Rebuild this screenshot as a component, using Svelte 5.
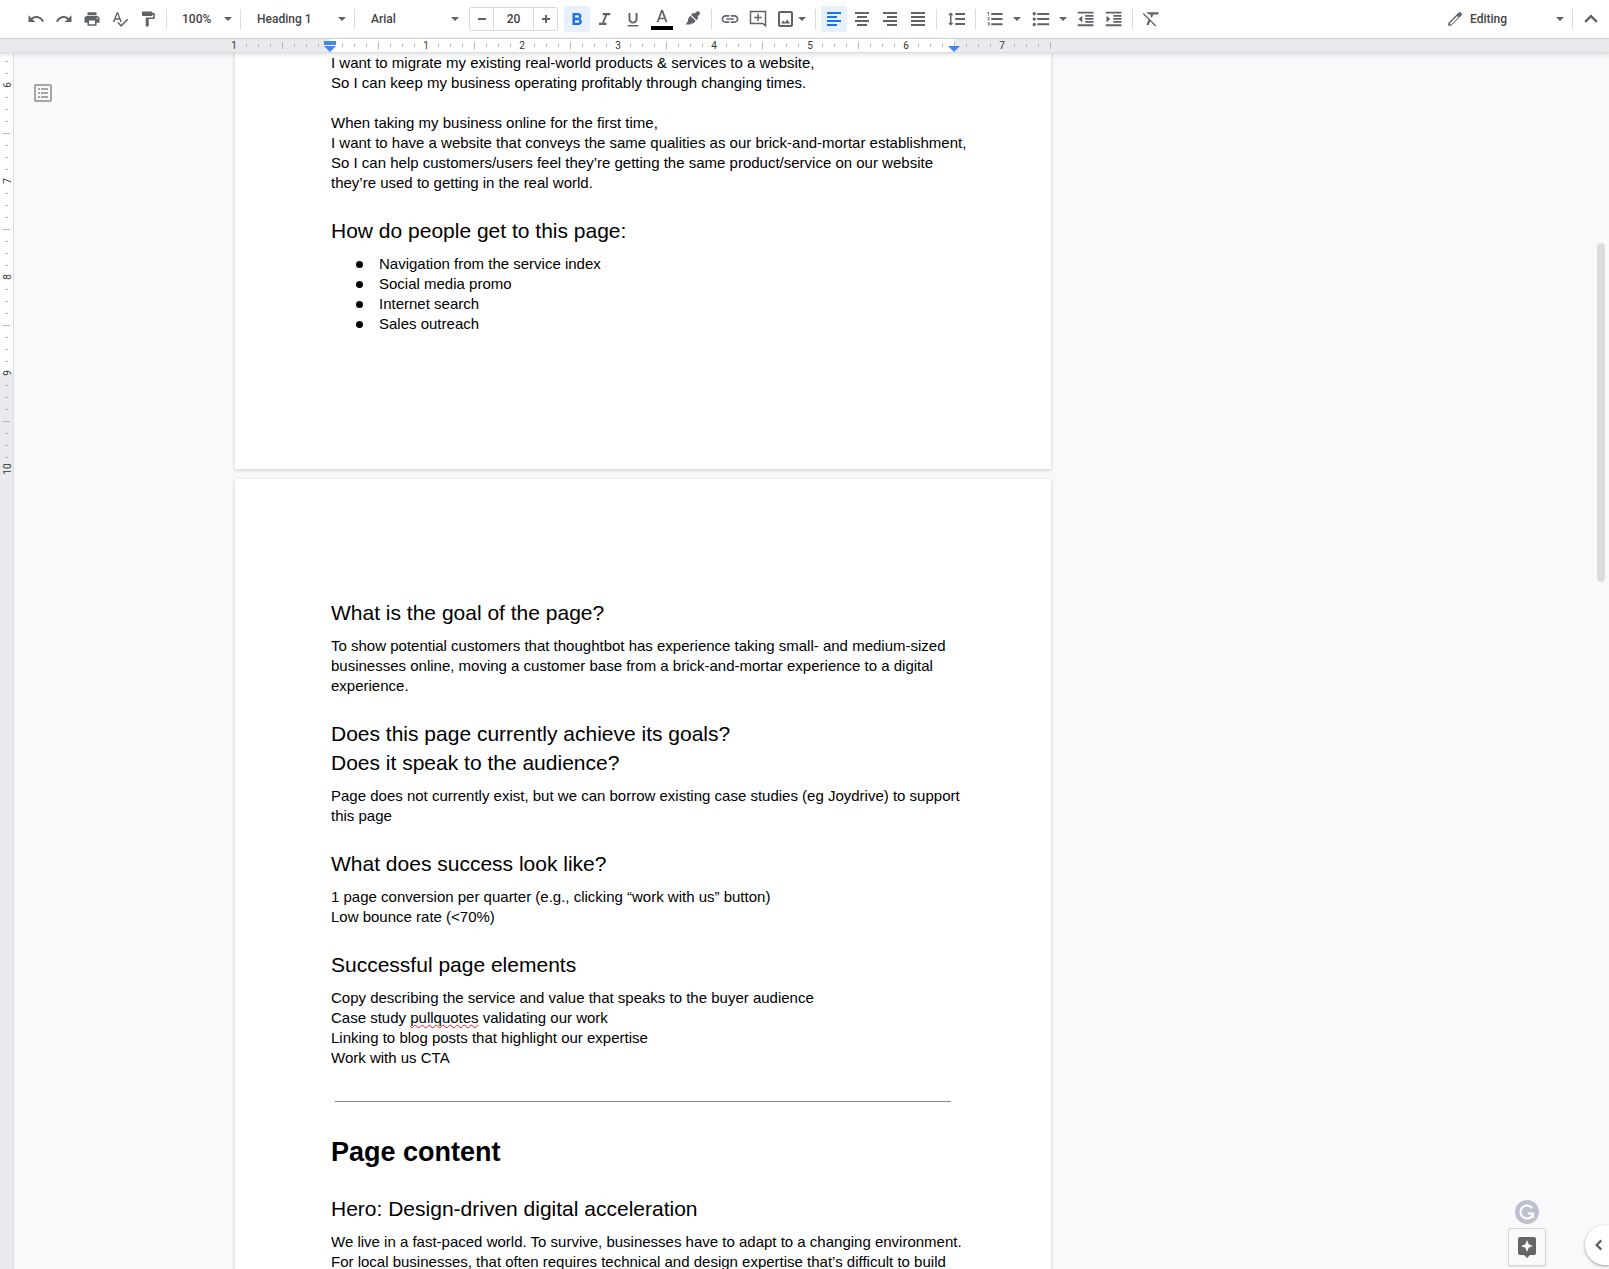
<script>
  const icons = {
    undo: 'M12.5 8c-2.65 0-5.05.99-6.9 2.6L2 7v9h9l-3.62-3.62c1.39-1.16 3.16-1.88 5.12-1.88 3.54 0 6.55 2.31 7.6 5.5l2.37-.78C21.08 11.03 17.15 8 12.5 8z',
    redo: 'M18.4 10.6C16.55 8.99 14.15 8 11.5 8c-4.65 0-8.58 3.03-9.96 7.22L3.9 16c1.05-3.19 4.05-5.5 7.6-5.5 1.95 0 3.73.72 5.12 1.88L13 16h9V7l-3.6 3.6z',
    print: 'M19 8H5c-1.66 0-3 1.34-3 3v6h4v4h12v-4h4v-6c0-1.66-1.34-3-3-3zm-3 11H8v-5h8v5zm3-7c-.55 0-1-.45-1-1s.45-1 1-1 1 .45 1 1-.45 1-1 1zm-1-9H6v4h12V3z',
    spell: 'M12.45 16h2.09L9.43 3H7.57L2.46 16h2.09l1.12-3h5.64l1.14 3zm-6.02-5L8.5 5.48 10.57 11H6.43zm15.16.59l-8.09 8.09L9.83 16l-1.41 1.41 5.09 5.09L23 13l-1.41-1.41z',
    paint: 'M18 4V3c0-.55-.45-1-1-1H5c-.55 0-1 .45-1 1v4c0 .55.45 1 1 1h12c.55 0 1-.45 1-1V6h1v4H9v11c0 .55.45 1 1 1h2c.55 0 1-.45 1-1v-9h8V4h-3z',
    bold: 'M16.2 11.6c1-.8 1.700-1.900 1.700-3.100C17.900 5.900 16 4 13.400 4H6v16h8.200c2.400 0 4.300-1.900 4.300-4.300 0-1.800-.9-3.300-2.300-4.100zM9.300 6.900h3.600c1 0 1.700.7 1.700 1.700s-.7 1.700-1.700 1.700H9.300V6.900zm4.100 10.200H9.300v-3.600h4.100c1 0 1.800.8 1.800 1.800s-.8 1.800-1.800 1.800z',
    italic: 'M9 4v3h3.2l-4 10H4v3h10v-3h-3.2l4-10H19V4z',
    underline: 'M12 18c3.31 0 6-2.69 6-6V4h-2.5v8c0 1.93-1.57 3.5-3.5 3.5S8.5 13.93 8.5 12V4H6v8c0 3.31 2.69 6 6 6zm-7 2v2h14v-2H5z',
    highlight: 'M15.5 4.500l3-2.500a2 2 0 0 1 2.700.1l.9.9a2 2 0 0 1 .1 2.700l-2.700 3.100c.8 1.400.7 2.600-.3 3.600l-1.200 1.100-7.200-7.200 1.200-1.200c1-1 2.200-1.200 3.500-.6zM9.700 7.400l7.200 7.200-2.600 2.600c-.8.8-2 .9-2.900.4L9.700 19.300H3.500l3.400-5c-.6-1-.5-2.200.3-3z',
    link: 'M2.900 12c0-1.710 1.390-3.100 3.100-3.100h5V6.800H6c-2.870 0-5.200 2.330-5.200 5.200s2.330 5.200 5.200 5.200h5v-2.100H6c-1.710 0-3.100-1.390-3.100-3.100zM7 13h10v-2H7v2zm11-6.200h-5v2.100h5c1.710 0 3.100 1.390 3.100 3.100s-1.390 3.100-3.100 3.100h-5v2.100h5c2.870 0 5.200-2.330 5.200-5.200S20.870 6.800 18 6.800z',
    comment: 'M1 1h22v22l-5-4H1V1zm2 2v14h15.700l2.300 1.900V3H3zm8 2h2v4h4v2h-4v4h-2v-4H7V9h4V5z',
    spacing: 'M6 7h2.500L5 3 1.500 7H4v10H1.500L5 21l3.500-4H6V7zm5-3v2.700h13V4H11zm0 16h13v-2.700H11V20zm0-6.700h13v-2.700H11v2.700z',
    numbered: 'M2 17.500h2v.5H3v1h1v.5H2v1h3v-4H2v1zm1-10h1v-5H1.500v1H3v4zm-1 3h1.800L2 12.600v.9h3v-1H3.200L5 10.400V9.500H2v1zM7 4v2.600h15V4H7zm0 16.300h15v-2.600H7v2.600zm0-7h15v-2.600H7v2.600z',
    bullets: 'M3 2.700a2 2 0 1 0 0 4.600 2 2 0 1 0 0-4.600zm0 7.200a2 2 0 1 0 0 4.500 2 2 0 1 0 0-4.500zm0 7.200a2 2 0 1 0 0 4.500 2 2 0 1 0 0-4.500zM7 4v2.600h16V4H7zm0 16.300h16v-2.600H7v2.600zm0-7h16v-2.600H7v2.600z',
    outdent: 'M11 17h11v-2.300H11V17zM2 12l5 4.500v-9L2 12zm-1 9.500h21v-2.500H1v2.500zM1 2.300v2.500h21V2.300H1zm10 6.700h11V6.700H11V9zm0 4h11v-2.300H11V13z',
    indent: 'M1 21.500h21v-2.500H1v2.500zM2 7.500v9l5-4.500-5-4.500zm9 9.500h11v-2.300H11V17zM1 2.300v2.500h21V2.300H1zm10 6.700h11V6.700H11V9zm0 4h11v-2.300H11V13z',
    clear: 'M2.300 4L1 5.300l7.700 7.700L5.800 20h3.100l2-4.900L17.700 22l1.300-1.300zM6 3v.3L9 6h3l-.8 2.200 2 2L15 6h7V3z',
    pencil: 'M3 17.250V21h3.750L20.500 7.300c1-1 1-2.300 0-3.300l-.5-.5c-1-1-2.300-1-3.300 0L3 17.250zM6 19H5v-1L15 8l1.500 1.500L6.500 19.500z'
  };
  const history = [['undo', 'Undo'], ['redo', 'Redo'], ['print', 'Print'], ['spell', 'Spelling and grammar check'], ['paint', 'Paint format']];
  const aligns = [
    ['Left align', 'M2 2h14v2H2zM2 6h10v2H2zM2 10h14v2H2zM2 14h10v2H2z'],
    ['Center align', 'M2 2h14v2H2zM4 6h10v2H4zM2 10h14v2H2zM4 14h10v2H4z'],
    ['Right align', 'M2 2h14v2H2zM6 6h10v2H6zM2 10h14v2H2zM6 14h10v2H6z'],
    ['Justify', 'M2 2h14v2H2zM2 6h14v2H2zM2 10h14v2H2zM2 14h14v2H2z']
  ];
  // One mark every eighth of an inch; whole inches carry a number instead.
  const marks = (from, to) => Array.from({ length: to - from + 1 }, (_, i) => from + i);
  const across = marks(0, 68);
  const down = marks(-2, 32);
  let fontSize = $state(20);
</script>

{#snippet icon(name)}
  <svg class="icon" viewBox="0 0 24 24" aria-hidden="true"><path fill-rule="evenodd" d={icons[name]} /></svg>
{/snippet}

{#snippet caret()}
  <svg class="caret" viewBox="0 0 8 4" aria-hidden="true"><path d="M0 0h8L4 4z" /></svg>
{/snippet}

<div class="app">
  <header class="toolbar">
    {#each history as [name, label]}
      <button aria-label={label}>{@render icon(name)}</button>
    {/each}
    <i class="sep"></i>
    <label class="pick zoom"><select aria-label="Zoom"><option>100%</option></select>{@render caret()}</label>
    <i class="sep"></i>
    <label class="pick style"><select aria-label="Styles"><option>Heading 1</option></select>{@render caret()}</label>
    <i class="sep"></i>
    <label class="pick font"><select aria-label="Font"><option>Arial</option></select>{@render caret()}</label>
    <div class="size">
      <button aria-label="Decrease font size" onclick={() => fontSize--}><svg viewBox="0 0 10 10"><path d="M1 4h8v2H1z" /></svg></button>
      <input aria-label="Font size" bind:value={fontSize} />
      <button aria-label="Increase font size" onclick={() => fontSize++}><svg viewBox="0 0 10 10"><path d="M1 4h3V1h2v3h3v2H6v3H4V6H1z" /></svg></button>
    </div>
    <button class="on" aria-label="Bold">{@render icon('bold')}</button>
    <button aria-label="Italic">{@render icon('italic')}</button>
    <button aria-label="Underline">{@render icon('underline')}</button>
    <button class="color" aria-label="Text color">
      <svg class="ink" viewBox="0 0 22 22" aria-hidden="true">
        <path d="M10.100 2L5.700 14h1.900l1-2.700h4.900l1 2.700h1.900L12 2h-1.900zm-1 7.700L11 4.400l1.900 5.300H9.100z" />
        <path class="black" d="M0 18h22v4H0z" />
      </svg>
    </button>
    <button class="color" aria-label="Highlight color">{@render icon('highlight')}</button>
    <i class="sep"></i>
    <button aria-label="Insert link">{@render icon('link')}</button>
    <button aria-label="Add comment">{@render icon('comment')}</button>
    <button class="image" aria-label="Insert image">
      <svg class="icon" viewBox="0 0 18 18" aria-hidden="true"><path fill-rule="evenodd" d="M3 1h11a2 2 0 0 1 2 2v12a2 2 0 0 1-2 2H3a2 2 0 0 1-2-2V3a2 2 0 0 1 2-2zm0 2v12h11V3H3zm1 10.500l2.300-2.900 1.700 1.900 2.200-3L13 13.500H4z" /></svg>
      {@render caret()}
    </button>
    <i class="sep"></i>
    {#each aligns as [label, bars], i}
      <button class:on={i === 0} aria-label={label}>
        <svg class="icon" viewBox="0 0 18 18" aria-hidden="true"><path d={bars} /></svg>
      </button>
    {/each}
    <i class="sep"></i>
    <button class="spacing" aria-label="Line spacing">{@render icon('spacing')}</button>
    <i class="sep"></i>
    <button class="list" aria-label="Numbered list">{@render icon('numbered')}{@render caret()}</button>
    <button class="list" aria-label="Bulleted list">{@render icon('bullets')}{@render caret()}</button>
    <button aria-label="Decrease indent">{@render icon('outdent')}</button>
    <button aria-label="Increase indent">{@render icon('indent')}</button>
    <i class="sep"></i>
    <button aria-label="Clear formatting">{@render icon('clear')}</button>

    <label class="pick mode">{@render icon('pencil')}<select aria-label="Mode"><option>Editing</option></select>{@render caret()}</label>
    <i class="sep"></i>
    <button aria-label="Hide the menus"><svg class="chevron" viewBox="0 0 12 12"><path d="M1 8.500l5-5 5 5" /></svg></button>
  </header>

  <div class="ruler">
    <svg width="816" height="13" aria-hidden="true">
      <rect class="live" x="95" width="624" height="13" />
      {#each across as n}
        {#if n % 8 === 0 && n !== 8}
          <text x={n * 12 - 1} y="10">{Math.abs(n / 8 - 1)}</text>
        {:else if n !== 8}
          <rect class="tick" x={n * 12 - 1} y={n % 4 ? 5 : 3} width="1" height={n % 4 ? 3 : 7} />
        {/if}
      {/each}
      <rect class="tick" x="719" y="3" width="1" height="4" />
      <path class="handle" d="M89 2h12v4H89zM89 7h12l-6 6z" />
      <path class="handle" d="M713 7h12l-6 6z" />
    </svg>
  </div>

  <main>
    <div class="side-ruler">
      <svg width="13" height="430" aria-hidden="true">
        <rect class="live" width="13" height="320" />
        {#each down as n}
          {#if n % 8 === 0}
            <text transform={`translate(11 ${32 + n * 12}) rotate(-90)`}>{6 + n / 8}</text>
          {:else}
            <rect class="tick" x={n % 4 ? 5 : 3} y={32 + n * 12} width={n % 4 ? 3 : 7} height="1" />
          {/if}
        {/each}
      </svg>
    </div>

    <button class="outline" aria-label="Show document outline">
      <svg viewBox="0 0 18 18"><path fill-rule="evenodd" d="M2 0h14a2 2 0 0 1 2 2v14a2 2 0 0 1-2 2H2a2 2 0 0 1-2-2V2a2 2 0 0 1 2-2zm0 2v14h14V2H2zm2 2h2v2H4zm3 0h7v2H7zM4 8h2v2H4zm3 0h7v2H7zm-3 4h2v2H4zm3 0h7v2H7z" /></svg>
    </button>

    <div class="pages">
      <article class="page first">
        <p>I want to migrate my existing real-world products &amp; services to a website,<br />So I can keep my business operating profitably through changing times.</p>
        <p class="after-blank">When taking my business online for the first time,<br />I want to have a website that conveys the same qualities as our brick-and-mortar establishment,<br />So I can help customers/users feel they’re getting the same product/service on our website<br />they’re used to getting in the real world.</p>
        <h2>How do people get to this page:</h2>
        <ul>
          <li>Navigation from the service index</li>
          <li>Social media promo</li>
          <li>Internet search</li>
          <li>Sales outreach</li>
        </ul>
      </article>
      <article class="page">
        <h2>What is the goal of the page?</h2>
        <p>To show potential customers that thoughtbot has experience taking small- and medium-sized<br />businesses online, moving a customer base from a brick-and-mortar experience to a digital<br />experience.</p>
        <h2>Does this page currently achieve its goals?<br />Does it speak to the audience?</h2>
        <p>Page does not currently exist, but we can borrow existing case studies (eg Joydrive) to support<br />this page</p>
        <h2>What does success look like?</h2>
        <p>1 page conversion per quarter (e.g., clicking “work with us” button)<br />Low bounce rate (&lt;70%)</p>
        <h2>Successful page elements</h2>
        <p>Copy describing the service and value that speaks to the buyer audience<br />Case study <span class="typo">pullquotes</span> validating our work<br />Linking to blog posts that highlight our expertise<br />Work with us CTA</p>
        <hr />
        <h1>Page content</h1>
        <h2>Hero: Design-driven digital acceleration</h2>
        <p>We live in a fast-paced world. To survive, businesses have to adapt to a changing environment.<br />For local businesses, that often requires technical and design expertise that’s difficult to build</p>
      </article>
    </div>

    <div class="scroll-thumb"></div>
    <div class="helpers">
      <button class="grammar" aria-label="Grammar assistant">
        <svg viewBox="0 0 24 24"><circle cx="12" cy="12" r="12" /><path d="M17.300 8.200A6.500 6.500 0 1 0 18 14.500M13 13.500h5V18" /></svg>
      </button>
      <button class="explore" aria-label="Explore">
        <svg viewBox="0 0 18 21"><path fill-rule="evenodd" d="M2 0h14a2 2 0 0 1 2 2v14a2 2 0 0 1-2 2h-4l-3 3-3-3H2a2 2 0 0 1-2-2V2a2 2 0 0 1 2-2zm7 3L7.300 7.300 3 9l4.300 1.700L9 15l1.700-4.300L15 9l-4.300-1.700z" /></svg>
      </button>
    </div>
    <button class="panel-toggle" aria-label="Show side panel"><svg class="chevron" viewBox="0 0 12 12"><path d="M8 2L4 6l4 4" /></svg></button>
  </main>
</div>

<style>
  :global(body) { margin: 0; overflow: hidden; }
  .app {
    display: flex;
    flex-direction: column;
    height: 100vh;
    overflow: hidden;
    background: #f8f9fa;
    font-family: Roboto, sans-serif;
    color: #000;
  }
  button, select, input { font: inherit; color: inherit; border: 0; background: none; padding: 0; margin: 0; }
  button { cursor: pointer; }
  svg { display: block; flex: none; }

  .toolbar {
    display: flex;
    align-items: center;
    gap: 2px;
    flex: none;
    box-sizing: border-box;
    height: 39px;
    padding: 0 5px 1px 23px;
    border-bottom: 1px solid #dadce0;
    background: #fff;
    color: #444;
    fill: #5f6368;
    font-size: 12px;
    font-weight: 500;
  }
  .toolbar > button {
    display: flex;
    flex: none;
    align-items: center;
    justify-content: center;
    width: 26px;
    height: 26px;
    border-radius: 2px;
  }
  .toolbar > .on { background: #e8f0fe; fill: #1a73e8; }
  .icon { width: 18px; height: 18px; }
  .caret { width: 8px; height: 4px; }
  .sep { flex: none; width: 1px; height: 20px; margin: 0 3px; background: #dadce0; }
  .toolbar > .color, .toolbar > .spacing { width: 28px; }
  .toolbar > .image { width: 37px; gap: 3px; }
  .toolbar > .list { width: 44px; gap: 9px; }
  .ink { width: 22px; height: 22px; }
  .black { fill: #000; }

  .pick { display: flex; flex: none; align-items: center; box-sizing: border-box; height: 26px; padding: 0 3px 0 11px; }
  .pick select { appearance: none; flex: 1; min-width: 0; outline: 0; }
  .zoom { width: 63px; padding-left: 10px; }
  .style { width: 103px; }
  .font { width: 102px; }
  .mode { width: 132px; margin-left: auto; gap: 6px; }
  .size {
    display: flex;
    flex: none;
    box-sizing: border-box;
    width: 89px;
    height: 24px;
    margin: 0 4px 0 5px;
    border: 1px solid #dadce0;
    border-radius: 2px;
  }
  .size button { flex: none; display: grid; place-items: center; width: 23px; }
  .size svg { width: 10px; height: 10px; }
  .size input { flex: 1; min-width: 0; border: solid #dadce0; border-width: 0 1px; text-align: center; }
  .chevron { width: 14px; height: 14px; fill: none; stroke: #5f6368; stroke-width: 2; }

  .ruler {
    z-index: 1;
    display: flex;
    flex: none;
    justify-content: center;
    padding-right: 323px;
    background: #e8eaed;
    border-bottom: 1px solid #dadce0;
    box-shadow: 0 1px 4px 1px rgba(60, 64, 67, 0.15);
  }
  .ruler svg, .side-ruler svg { overflow: visible; }
  .live { fill: #fff; }
  .tick { fill: #b4b6b9; }
  .handle { fill: #4285f4; }
  text { font-size: 10px; fill: #333; text-anchor: middle; }

  main { position: relative; display: flex; flex: 1; min-height: 0; overflow: hidden; }
  .side-ruler { flex: none; width: 13px; border-right: 1px solid #dadce0; background: #e8eaed; }
  .outline { flex: none; align-self: flex-start; display: grid; place-items: center; width: 58px; padding-top: 31px; }
  .outline svg { width: 18px; height: 18px; fill: #a5a6a8; }

  .pages {
    display: flex;
    flex: 1;
    flex-direction: column;
    align-items: center;
    gap: 10px;
    padding-right: 395px;
  }
  .page {
    flex: none;
    box-sizing: border-box;
    width: 816px;
    padding: 96px;
    background: #fff;
    box-shadow: 0 1px 3px 1px rgba(60, 64, 67, 0.15);
    font-family: "Liberation Sans", Arial, sans-serif;
    font-size: 15px;
    line-height: 20px;
    white-space: nowrap;
  }
  .first { padding-top: 0; padding-bottom: 135px; }
  p, h1, h2, ul { margin: 0; padding: 0; }
  .after-blank { margin-top: 20px; }
  h1 { font-size: 27px; line-height: 37px; font-weight: 700; }
  h2 { padding: 23px 0 9px; font-size: 21px; line-height: 29px; font-weight: 400; }
  ul { list-style: none; padding-left: 25px; }
  li { display: flex; align-items: center; gap: 16px; }
  li::before { content: ""; width: 7px; height: 7px; border-radius: 50%; background: #000; }
  .typo { text-decoration: underline wavy #e01b24 1px; text-underline-offset: 1px; text-decoration-skip-ink: none; }
  hr { height: 1px; margin: 33px 4px 32px; border: 0; background: #888; }

  .scroll-thumb { position: absolute; right: 4px; top: 190px; width: 8px; height: 339px; border-radius: 4px; background: #dadce0; }
  .helpers { position: absolute; right: 63px; bottom: 3px; display: flex; flex-direction: column; align-items: center; gap: 4px; }
  .grammar svg { width: 24px; height: 24px; fill: #bfc0ce; }
  .grammar path { fill: none; stroke: #fff; stroke-width: 2; }
  .explore {
    display: grid;
    place-items: center;
    width: 38px;
    height: 38px;
    border: 1px solid #d4d5d7;
    border-radius: 2px;
    background: #fafafa;
    box-shadow: 0 1px 2px rgba(0, 0, 0, 0.1);
  }
  .explore svg { width: 18px; height: 21px; fill: #666; }
  .panel-toggle {
    position: absolute;
    right: 0;
    bottom: 4px;
    display: grid;
    place-items: center;
    width: 24px;
    height: 40px;
    padding-left: 4px;
    border-radius: 20px 0 0 20px;
    background: #fff;
    box-shadow: 0 1px 3px rgba(60, 64, 67, 0.5);
  }
</style>
